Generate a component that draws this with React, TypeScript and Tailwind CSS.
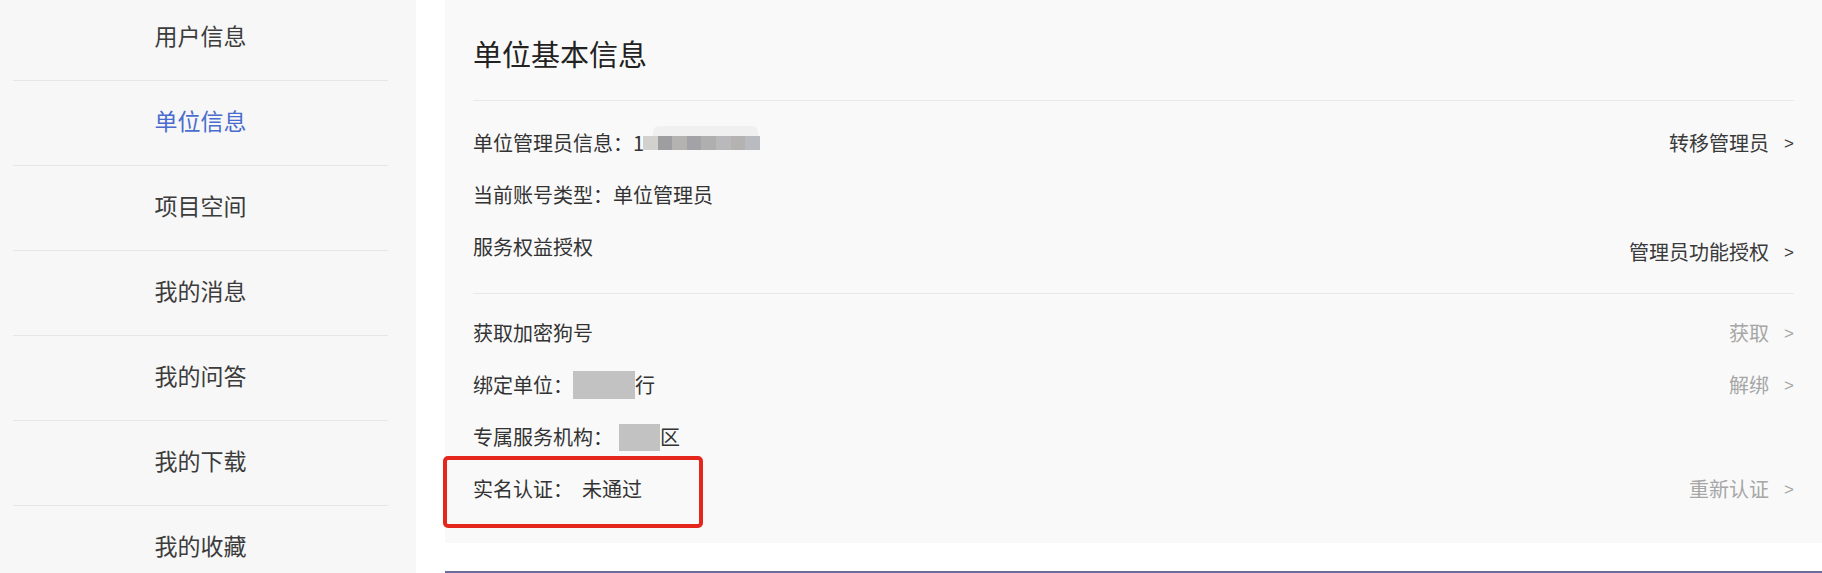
import React from "react";

const navItems = ["用户信息", "单位信息", "项目空间", "我的消息", "我的问答", "我的下载", "我的收藏"];

const pixels = ["#d3d1ce", "#9e9ea1", "#b5b3b1", "#a3a3a7", "#afafaf", "#b9b9bb", "#b5b3b1", "#b9bbc1"];

function Arrow() {
  return <span className="ml-[15px] text-[17px] font-['Liberation_Sans',sans-serif] leading-none">&gt;</span>;
}

export default function App() {
  return (
    <div className="flex h-[573px] w-full overflow-hidden bg-white font-['Noto_Sans_CJK_SC','Microsoft_YaHei',sans-serif] text-[#333]">
      <aside className="w-[416px] shrink-0 bg-[#f7f7f7]">
        <div className="-mt-[4px] ml-[13px] mr-[28px]">
          {navItems.map((t, i) => (
            <div
              key={t}
              className={`flex h-[85px] items-center justify-center border-b border-[#e6e6e6] pb-[5px] text-[23px] ${
                i === 1 ? "text-[#4a6cce]" : "text-[#3c3c3c]"
              }`}
            >
              {t}
            </div>
          ))}
        </div>
      </aside>

      <main className="flex-1 pl-[29px]">
        <div className="relative h-[543px] bg-[#f9f9f9] px-[28px]">
          <div className="border-b border-[#e8e8e8] pt-[33px] pb-[27px]">
            <h1 className="text-[29px] leading-[40px] text-[#222]">单位基本信息</h1>
          </div>

          <div className="border-b border-[#e8e8e8] pt-[16px] pb-[20px] text-[20px]">
            <div className="flex h-[52px] items-center justify-between">
              <div className="flex items-center">
                <span className="-mr-[4px]">单位管理员信息：1</span>
                <span className="relative ml-[3px] flex h-[14px]">
                  <span className="absolute -top-[10px] left-[10px] h-[10px] w-[105px] rounded-t-[6px] bg-[#f0f0f0]" />
                  {pixels.map((c, i) => (
                    <span key={i} className="h-[14px] w-[14.6px]" style={{ background: c }} />
                  ))}
                </span>
              </div>
              <div className="flex items-center text-[#3a3a3a]">
                转移管理员
                <Arrow />
              </div>
            </div>
            <div className="flex h-[52px] items-center">当前账号类型：单位管理员</div>
            <div className="flex h-[52px] items-center justify-between">
              <span>服务权益授权</span>
              <div className="mt-[10px] flex items-center text-[#3a3a3a]">
                管理员功能授权
                <Arrow />
              </div>
            </div>
          </div>

          <div className="pt-[13px] text-[20px]">
            <div className="flex h-[52px] items-center justify-between">
              <span>获取加密狗号</span>
              <div className="flex items-center text-[#a6a6a6]">
                获取
                <Arrow />
              </div>
            </div>
            <div className="flex h-[52px] items-center justify-between">
              <div className="flex items-center">
                <span>绑定单位：</span>
                <span className="h-[28px] w-[62px] bg-[#c2c2c2]" />
                <span>行</span>
              </div>
              <div className="flex items-center text-[#a6a6a6]">
                解绑
                <Arrow />
              </div>
            </div>
            <div className="flex h-[52px] items-center">
              <span>专属服务机构：</span>
              <span className="ml-[6px] h-[27px] w-[41px] bg-[#c2c2c2]" />
              <span>区</span>
            </div>
            <div className="flex h-[52px] items-center justify-between">
              <span>实名认证：&nbsp;&nbsp;未通过</span>
              <div className="flex items-center text-[#a6a6a6]">
                重新认证
                <Arrow />
              </div>
            </div>
          </div>

          <div className="pointer-events-none absolute left-[-2px] top-[456px] h-[72px] w-[260px] rounded-[5px] border-[4px] border-[#e5261c]" />
        </div>
        <div className="mt-[28px] h-[2px] bg-[#6d6d9b]" />
      </main>
    </div>
  );
}
